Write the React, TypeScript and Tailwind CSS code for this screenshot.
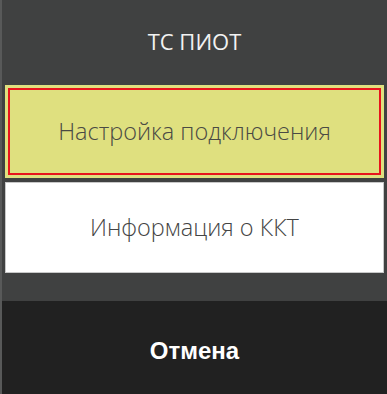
export default function App() {
  return (
    <div
      className="w-[387px] h-[394px] flex flex-col bg-[#404141] border-l-2 border-[#585959]"
      style={{ fontFamily: '"Open Sans", "Noto Sans", sans-serif' }}
    >
      <div className="h-[85px] flex items-center justify-center pb-[3px] text-[22px] text-[#f2f2f2]">
        ТС ПИОТ
      </div>
      <div className="mx-[3px] h-[93px] bg-[#dfe07f] p-[3px]">
        <button className="w-full h-full border-2 border-[#e8141c] flex items-center justify-center text-[23.5px] font-light text-[#4a4a44]">
          Настройка подключения
        </button>
      </div>
      <div className="mx-[3px] mt-[4px] h-[91px] bg-white border border-[#c8c8c8] flex items-center justify-center text-[23.5px] font-light text-[#444]">
        Информация о ККТ
      </div>
      <div className="flex-1 min-h-0 flex flex-col justify-end">
        <div
          className="h-[93px] bg-[#212121] flex items-center justify-center pt-[6px] text-[24px] font-bold text-white"
          style={{ fontFamily: '"Liberation Sans", Arial, sans-serif' }}
        >
          Отмена
        </div>
      </div>
    </div>
  )
}
